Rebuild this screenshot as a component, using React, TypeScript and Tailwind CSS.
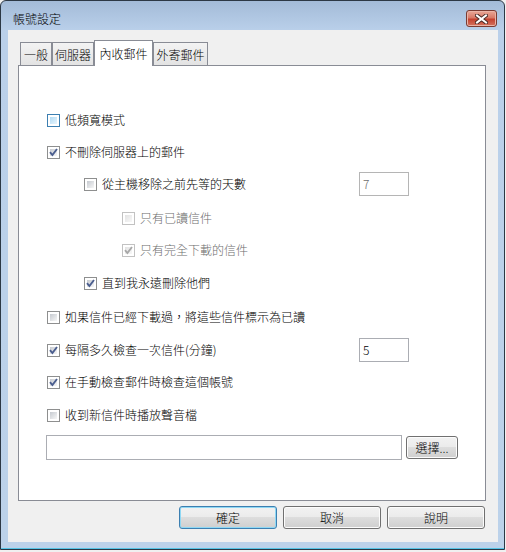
import React from "react";

type BoxProps = { checked?: boolean; disabled?: boolean; hot?: boolean };

function CheckBox({ checked, disabled, hot }: BoxProps) {
  const border = hot ? "border-[#3c7fb1]" : disabled ? "border-[#c2c2c2]" : "border-[#8e8f8f]";
  const fill = hot
    ? "bg-[linear-gradient(135deg,#b2dbf4,#e8f5fd)]"
    : disabled
      ? "bg-[linear-gradient(135deg,#e2e2e2,#f8f8f8)]"
      : "bg-[linear-gradient(135deg,#c6cad0,#f7f7f7)]";
  return (
    <div className={`relative h-[13px] w-[13px] shrink-0 border bg-white p-[2px] ${border}`}>
      <div className={`h-full w-full ${fill}`} />
      {checked && (
        <svg className="absolute inset-0" width="11" height="11" viewBox="0 0 11 11">
          <polyline
            points="2,5.2 4.4,8 9,2"
            fill="none"
            stroke={disabled ? "#a8a8a8" : "#4b5e8f"}
            strokeWidth="1.9"
          />
        </svg>
      )}
    </div>
  );
}

function Row({
  className,
  label,
  gray,
  ...box
}: BoxProps & { className: string; label: string; gray?: boolean }) {
  return (
    <div className={`flex h-[24px] items-center ${className}`}>
      <CheckBox {...box} />
      <span className={`ml-[5px] whitespace-nowrap ${gray ? "text-[#6d6d6d]" : "text-black"}`}>{label}</span>
    </div>
  );
}

function NumBox({ value, disabled }: { value: string; disabled?: boolean }) {
  return (
    <div
      className={`flex h-[24px] w-[50px] items-center border bg-white pl-[3px] ${
        disabled ? "border-[#b5b5b5] text-[#6d6d6d]" : "border-[#abadb3] text-black"
      }`}
    >
      {value}
    </div>
  );
}

function Button({ label, def, className = "" }: { label: string; def?: boolean; className?: string }) {
  return (
    <div
      className={`flex items-center justify-center rounded-[3px] border bg-[linear-gradient(to_bottom,#f2f2f2_0%,#ebebeb_50%,#dddddd_50%,#cfcfcf_100%)] text-black ${
        def ? "border-[#3c7fb1] shadow-[inset_0_0_0_1px_#8fd8f4]" : "border-[#707070] shadow-[inset_0_0_0_1px_#fcfcfc]"
      } ${className}`}
    >
      {label}
    </div>
  );
}

export default function App() {
  const tabs = [
    { label: "一般", w: "w-[32px]" },
    { label: "伺服器", w: "w-[42px]" },
    { label: "內收郵件", w: "w-[59px]", active: true },
    { label: "外寄郵件", w: "w-[55px]" },
  ];

  return (
    <div className="h-[552px] w-[506px] bg-[#f0f0f0] font-['Noto_Sans_CJK_TC','Noto_Sans_CJK_SC',sans-serif] text-[12px] font-light leading-[16px]">
      <div className="flex h-[550px] w-[505px] flex-col rounded-t-[6px] border border-[#2c3845] bg-[linear-gradient(to_bottom,#a3bbd8_0px,#bad0ea_30px,#bcd2ea_100%)]">
        {/* title bar */}
        <div className="flex h-[29px] shrink-0 items-start justify-between">
          <span className="ml-[12px] mt-[10px] text-black">帳號設定</span>
          <div className="mr-[7px] mt-[9px] flex h-[17px] w-[31px] items-center justify-center rounded-[3px] border border-[#7a3b32] bg-[linear-gradient(to_bottom,#e9a898_0%,#d87a68_45%,#c4412f_55%,#d4735f_100%)] shadow-[inset_0_0_0_1px_#eab3a6]">
            <svg width="13" height="10" viewBox="0 0 13 10">
              <path d="M2 1.5 L11 8.5 M11 1.5 L2 8.5" stroke="#4a2a26" strokeWidth="4" strokeLinecap="square" />
              <path d="M2 1.5 L11 8.5 M11 1.5 L2 8.5" stroke="#ffffff" strokeWidth="2" strokeLinecap="square" />
            </svg>
          </div>
        </div>

        {/* client area */}
        <div className="ml-[7px] flex h-[512px] w-[490px] shrink-0 flex-col bg-[#f0f0f0] pt-[10px]">
          <div className="ml-[12px] flex h-[25px] items-end">
            {tabs.map((t) =>
              t.active ? (
                <div
                  key={t.label}
                  className={`relative z-10 -mb-[1px] flex h-[26px] items-center justify-center border border-b-0 border-[#898c95] bg-white ${t.w}`}
                >
                  {t.label}
                </div>
              ) : (
                <div
                  key={t.label}
                  className={`flex h-[23px] items-center justify-center border border-b-0 border-[#898c95] bg-[linear-gradient(to_bottom,#f3f3f3,#e3e3e3)] pt-[2px] ${t.w}`}
                >
                  {t.label}
                </div>
              ),
            )}
          </div>

          <div className="ml-[10px] flex h-[436px] w-[468px] flex-col border border-[#898c95] bg-white">
            <Row className="mt-[42px] pl-[28px]" hot label="低頻寬模式" />
            <Row className="mt-[8px] pl-[28px]" checked label="不刪除伺服器上的郵件" />
            <div className="mt-[8px] flex h-[24px] items-center pl-[65px]">
              <div className="flex w-[275px] items-center">
                <CheckBox />
                <span className="ml-[5px]">從主機移除之前先等的天數</span>
              </div>
              <NumBox value="7" disabled />
            </div>
            <Row className="mt-[10px] pl-[103px]" disabled gray label="只有已讀信件" />
            <Row className="mt-[8px] pl-[103px]" disabled checked gray label="只有完全下載的信件" />
            <Row className="mt-[9px] pl-[65px]" checked label="直到我永遠刪除他們" />
            <Row className="mt-[10px] pl-[28px]" label="如果信件已經下載過，將這些信件標示為已讀" />
            <div className="mt-[9px] flex h-[24px] items-center pl-[28px]">
              <div className="flex w-[312px] items-center">
                <CheckBox checked />
                <span className="ml-[5px]">每隔多久檢查一次信件(分鐘)</span>
              </div>
              <NumBox value="5" />
            </div>
            <Row className="mt-[8px] pl-[28px]" checked label="在手動檢查郵件時檢查這個帳號" />
            <Row className="mt-[9px] pl-[28px]" label="收到新信件時播放聲音檔" />
            <div className="mt-[8px] flex items-start pl-[27px]">
              <div className="h-[25px] w-[356px] border border-[#abadb3] bg-white" />
              <Button label="選擇..." className="ml-[4px] mt-[1px] h-[23px] w-[52px]" />
            </div>
          </div>

          <div className="mt-[5px] flex justify-end gap-[6px] pr-[13px]">
            <Button label="確定" def className="h-[23px] w-[98px]" />
            <Button label="取消" className="h-[23px] w-[98px]" />
            <Button label="說明" className="h-[23px] w-[98px]" />
          </div>
        </div>

        <div className="mt-[6px] h-[1px] w-full bg-[#55c4e6]" />
      </div>
    </div>
  );
}
